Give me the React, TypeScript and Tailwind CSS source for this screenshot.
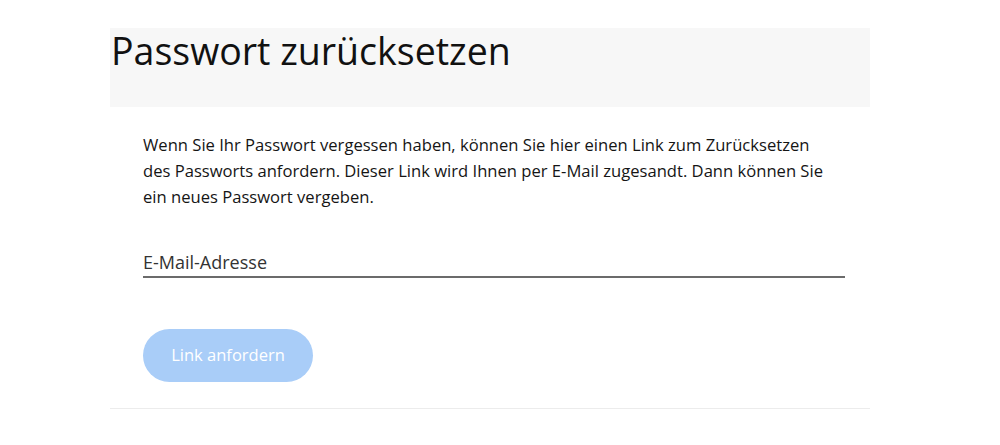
import React, { useState } from 'react';

const App: React.FC = () => {
  const [email, setEmail] = useState('');

  return (
    <div className="min-h-screen bg-white pt-[28px] font-['Open_Sans',sans-serif] text-[#1a1a1a]">
      <div className="ml-[110px] w-[760px]">
        <div className="h-[79px] bg-[#f7f7f7] pl-[1px] pt-[1px]">
          <h1 className="text-[37.5px] leading-[44px] text-[#111]">Passwort zurücksetzen</h1>
        </div>

        <div className="border-b border-[#ececec] pl-[33px] pb-[26px]">
          <p className="mt-[25px] w-[715px] text-[16.6px] leading-[26px] text-[#151515]">
            Wenn Sie Ihr Passwort vergessen haben, können Sie hier einen Link zum Zurücksetzen
            <br />
            des Passworts anfordern. Dieser Link wird Ihnen per E-Mail zugesandt. Dann können Sie
            <br />
            ein neues Passwort vergeben.
          </p>

          <div className="mt-[39px] w-[702px] border-b-2 border-[#6b6b6b]">
            <input
              type="email"
              value={email}
              onChange={(e) => setEmail(e.target.value)}
              placeholder="E-Mail-Adresse"
              className="block h-[27px] w-full bg-transparent text-[18px] text-[#333] outline-none placeholder:text-[#333]"
            />
          </div>

          <button
            type="button"
            disabled
            className="mt-[51px] h-[53px] w-[170px] rounded-full bg-[#a9cdf8] text-[16.5px] text-white"
          >
            Link anfordern
          </button>
        </div>
      </div>
    </div>
  );
};

export default App;
